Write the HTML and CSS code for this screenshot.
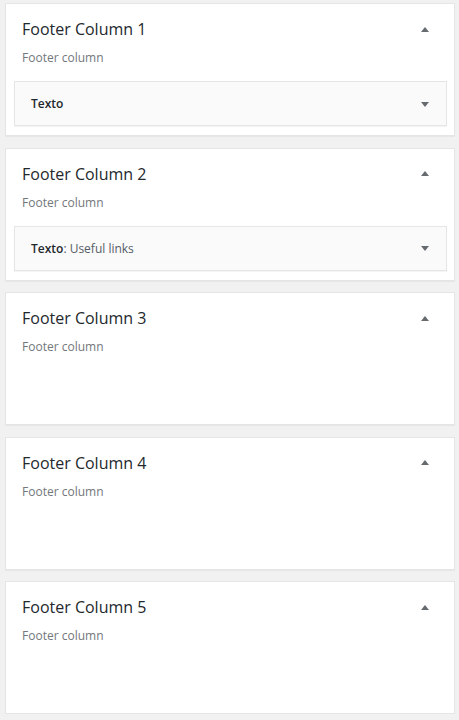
FILE: index.html
```html
<!DOCTYPE html>
<html lang="es">
<head>
<meta charset="utf-8">
<title>Widgets</title>
<link rel="stylesheet" href="styles.css">
</head>
<body>
<div class="sidebars">
  <section class="sidebar">
    <div class="sidebar-head">
      <h2 class="sidebar-title">Footer Column 1</h2>
      <svg class="arrow" width="8" height="5" viewBox="0 0 8 5"><polygon points="4,0 8,5 0,5"/></svg>
    </div>
    <p class="sidebar-desc">Footer column</p>
    <div class="widget">
      <h3 class="widget-title">Texto</h3>
      <svg class="arrow" width="8" height="5" viewBox="0 0 8 5"><polygon points="0,0 8,0 4,5"/></svg>
    </div>
  </section>
  <section class="sidebar">
    <div class="sidebar-head">
      <h2 class="sidebar-title">Footer Column 2</h2>
      <svg class="arrow" width="8" height="5" viewBox="0 0 8 5"><polygon points="4,0 8,5 0,5"/></svg>
    </div>
    <p class="sidebar-desc">Footer column</p>
    <div class="widget">
      <h3 class="widget-title">Texto<span class="in-title">: Useful links</span></h3>
      <svg class="arrow" width="8" height="5" viewBox="0 0 8 5"><polygon points="0,0 8,0 4,5"/></svg>
    </div>
  </section>
  <section class="sidebar">
    <div class="sidebar-head">
      <h2 class="sidebar-title">Footer Column 3</h2>
      <svg class="arrow" width="8" height="5" viewBox="0 0 8 5"><polygon points="4,0 8,5 0,5"/></svg>
    </div>
    <p class="sidebar-desc">Footer column</p>
  </section>
  <section class="sidebar">
    <div class="sidebar-head">
      <h2 class="sidebar-title">Footer Column 4</h2>
      <svg class="arrow" width="8" height="5" viewBox="0 0 8 5"><polygon points="4,0 8,5 0,5"/></svg>
    </div>
    <p class="sidebar-desc">Footer column</p>
  </section>
  <section class="sidebar">
    <div class="sidebar-head">
      <h2 class="sidebar-title">Footer Column 5</h2>
      <svg class="arrow" width="8" height="5" viewBox="0 0 8 5"><polygon points="4,0 8,5 0,5"/></svg>
    </div>
    <p class="sidebar-desc">Footer column</p>
  </section>
</div>
</body>
</html>
```

FILE: styles.css
```css
html, body {
  margin: 0;
  padding: 0;
  background: #f1f1f1;
  font-family: "Open Sans", "Noto Sans", sans-serif;
}

.sidebars {
  display: flex;
  flex-direction: column;
  gap: 11.5px;
  padding: 3px 5px 0 5px;
  width: 450px;
}

.sidebar {
  box-sizing: border-box;
  height: 133px;
  background: #fff;
  border: 1px solid #e5e5e5;
  box-shadow: 0 1px 1px rgba(0, 0, 0, 0.04);
  padding: 14px 7px 0 8px;
}

.sidebar-head {
  display: flex;
  align-items: center;
  justify-content: space-between;
  padding: 0 18px 0 8px;
}

.sidebar-title {
  margin: 0;
  font-size: 16px;
  line-height: 22px;
  font-weight: 500;
  color: #23282d;
}

.arrow {
  display: block;
  fill: #666b70;
  flex: none;
}

.sidebar-desc {
  margin: 9px 0 0 8px;
  font-size: 12px;
  line-height: 18px;
  color: #72777c;
}

.widget {
  margin-top: 14px;
  display: flex;
  align-items: center;
  justify-content: space-between;
  background: #fafafa;
  border: 1px solid #e5e5e5;
  box-shadow: 0 1px 1px rgba(0, 0, 0, 0.04);
  padding: 13px 17px 12px 16px;
}

.widget-title {
  margin: 0;
  font-size: 12px;
  line-height: 18px;
  font-weight: 600;
  color: #23282d;
}

.in-title {
  font-weight: 400;
  color: #555d66;
}
```
